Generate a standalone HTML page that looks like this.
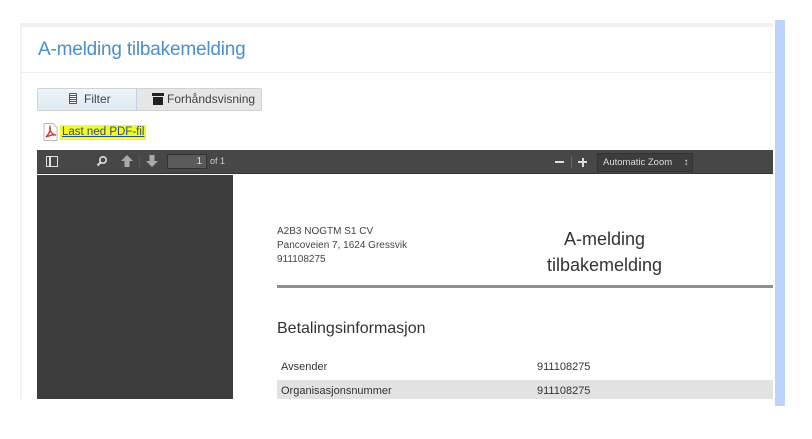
<!DOCTYPE html>
<html><head><meta charset="utf-8"><style>
*{margin:0;padding:0;box-sizing:border-box}
body{width:812px;height:439px;background:#fff;position:relative;overflow:hidden;font-family:"Liberation Sans",sans-serif}
.a{position:absolute}
</style></head><body>
<div class="a" style="left:775px;top:20px;width:10px;height:386px;background:#bcd4fb"></div>
<div class="a" style="left:20px;top:23px;width:753px;height:4px;background:#f0f0f0"></div>
<div class="a" style="left:20px;top:23px;width:2px;height:376px;background:#f2f2f2"></div>
<div class="a" style="left:22px;top:72px;width:751px;height:1px;background:#ececec"></div>
<div class="a" style="left:38px;top:39px;font-size:19px;color:#4a8fcb;letter-spacing:-0.2px">A-melding tilbakemelding</div>
<div class="a" style="left:37px;top:88px;width:225px;height:23px;border:1px solid #d2d2d2;border-radius:2px;background:#e6e6e6"></div>
<div class="a" style="left:38px;top:89px;width:99px;height:21px;background:linear-gradient(#eef5fb,#dde9f3);border-right:1px solid #ccd"></div>
<div class="a" style="left:69px;top:93px;width:8px;height:11px;border:1.5px solid #555;border-radius:1px;background:repeating-linear-gradient(#fff 0 1px,#555 1px 2px)"></div>
<div class="a" style="left:84px;top:92px;font-size:12px;color:#444">Filter</div>
<div class="a" style="left:152px;top:93px;width:12px;height:3px;background:#222"></div>
<div class="a" style="left:153px;top:97px;width:10px;height:8px;background:#222"></div>
<div class="a" style="left:167px;top:92px;font-size:12px;color:#444">Forhåndsvisning</div>
<svg class="a" style="left:43px;top:123px" width="15" height="18"><path d="M1 .5h9l4 4v13H1z" fill="#fff" stroke="#bbb"/><path d="M3 14c3-3 5-6 4-10-1 3 2 8 6 8-4-1-7 1-10 2z" fill="none" stroke="#d33" stroke-width="1.4"/></svg>
<div class="a" style="left:60px;top:125px;height:15px;padding:0 2px;background:#f4fb21;font-size:11.5px;color:#2a4b8a;text-decoration:underline;line-height:15px">Last ned PDF-fil</div>
<div class="a" style="left:37px;top:150px;width:736px;height:24px;background:#474747;border-bottom:1px solid #333"></div>
<div class="a" style="left:46px;top:156px;width:12px;height:11px;border:1.5px solid #ddd"></div>
<div class="a" style="left:49px;top:156px;width:1.5px;height:11px;background:#ddd"></div>
<svg class="a" style="left:96px;top:155px" width="12" height="12"><circle cx="7" cy="5" r="3.2" fill="none" stroke="#ddd" stroke-width="1.6"/><path d="M5 7L1.5 10.5" stroke="#ddd" stroke-width="2"/></svg>
<svg class="a" style="left:121px;top:155px" width="12" height="12"><path d="M6 0L12 6H8.5V12H3.5V6H0z" fill="#aaa"/></svg>
<div class="a" style="left:139px;top:155px;width:1px;height:13px;background:#555"></div>
<svg class="a" style="left:146px;top:155px" width="12" height="12"><path d="M6 12L12 6H8.5V0H3.5V6H0z" fill="#aaa"/></svg>
<div class="a" style="left:167px;top:154px;width:40px;height:15px;background:#5a5a5a;border:1px solid #333;color:#ddd;font-size:10px;text-align:right;padding-right:4px;line-height:13px">1</div>
<div class="a" style="left:210px;top:156px;color:#ccc;font-size:9px">of 1</div>
<div class="a" style="left:555px;top:161px;width:9px;height:2px;background:#ddd"></div>
<div class="a" style="left:571px;top:156px;width:1px;height:12px;background:#666"></div>
<div class="a" style="left:578px;top:161px;width:9px;height:2px;background:#ddd"></div>
<div class="a" style="left:581.5px;top:157.5px;width:2px;height:9px;background:#ddd"></div>
<div class="a" style="left:597px;top:153px;width:96px;height:19px;background:#3d3d3d;border:1px solid #333;color:#ddd;font-size:9.5px;line-height:17px;padding-left:5px">Automatic Zoom <span style="margin-left:9px">&#x2195;</span></div>
<div class="a" style="left:37px;top:175px;width:196px;height:224px;background:#3c3c3c"></div>
<div class="a" style="left:233px;top:175px;width:540px;height:224px;background:#fff;color:#333">
<div class="a" style="left:44px;top:50px;font-size:10px;line-height:14px;color:#444">A2B3 NOGTM S1 CV<br>Pancoveien 7, 1624 Gressvik<br>911108275</div>
<div class="a" style="left:299px;top:51px;font-size:18px;line-height:26px;text-align:center;color:#333;width:145px">A-melding<br>tilbakemelding</div>
<div class="a" style="left:44px;top:110px;width:496px;height:3px;background:#8f8f8f"></div>
<div class="a" style="left:44px;top:145px;font-size:16px;color:#333">Betalingsinformasjon</div>
<div class="a" style="left:48px;top:186px;font-size:11px">Avsender</div>
<div class="a" style="left:304px;top:186px;font-size:11px">911108275</div>
<div class="a" style="left:44px;top:205px;width:496px;height:19px;background:#e2e2e2"></div>
<div class="a" style="left:48px;top:210px;font-size:11px">Organisasjonsnummer</div>
<div class="a" style="left:304px;top:210px;font-size:11px">911108275</div>
</div>
</body></html>
